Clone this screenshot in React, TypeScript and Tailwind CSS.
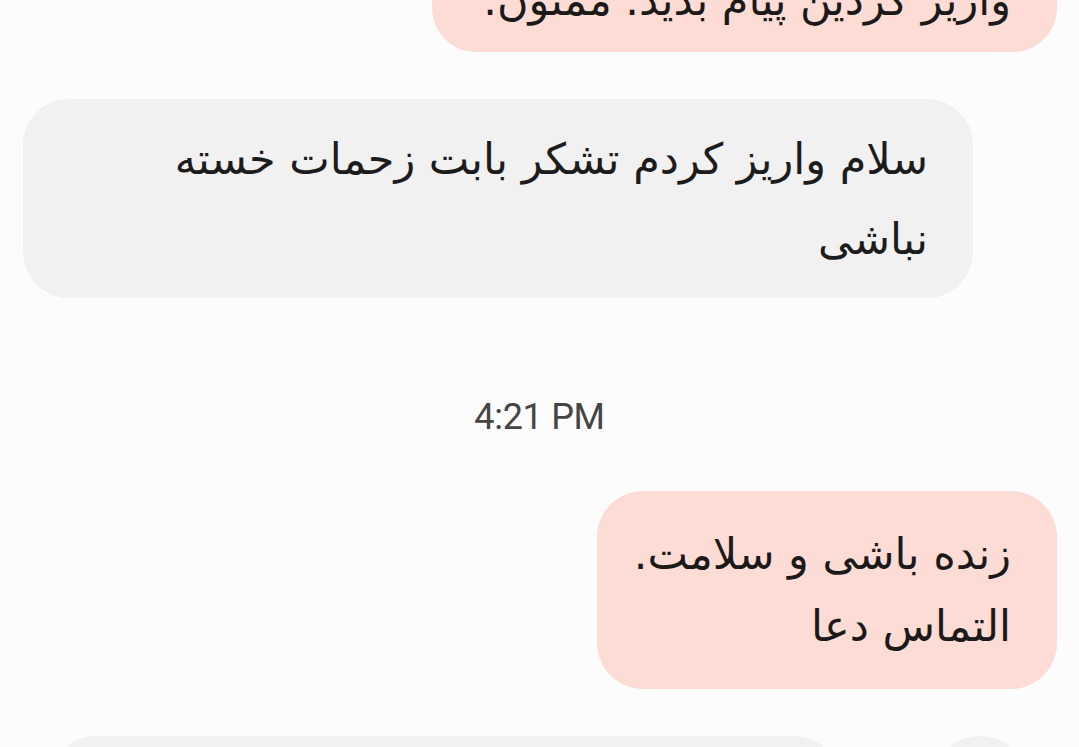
export default function App() {
  const fa = { fontFamily: '"DejaVu Sans", "Noto Sans", sans-serif' };

  return (
    <div className="h-[747px] w-full overflow-hidden bg-[#fcfcfc]">
      <div className="flex flex-col">
        {/* cut-off outgoing bubble at top */}
        <div className="-mt-[100px] ml-auto mr-[22px] flex h-[152px] w-[625px] items-end justify-end rounded-[44px] bg-[#fddcd5] px-[46px] pb-[22px]">
          <p dir="rtl" style={fa} className="whitespace-nowrap text-[43px] leading-[60px] text-[#1c1a19]">
            واریز کردین پیام بدید. ممنون.
          </p>
        </div>

        {/* incoming bubble */}
        <div className="ml-[23px] mt-[47px] flex h-[199px] w-[950px] items-center justify-end rounded-[46px] bg-[#f1f1f1] pl-[40px] pr-[45px]">
          <p dir="rtl" style={fa} className="text-[43px] leading-[80px] text-[#1c1c1c]">
            سلام واریز کردم تشکر بابت زحمات خسته
            <br />
            نباشی
          </p>
        </div>

        {/* time stamp */}
        <div className="mt-[97px] flex justify-center">
          <span className="font-['Roboto'] text-[36px] leading-[44px] tracking-[-0.3px] text-[#454545]">4:21 PM</span>
        </div>

        {/* outgoing bubble */}
        <div className="ml-auto mr-[22px] mt-[52px] flex h-[198px] w-[460px] items-center justify-end rounded-[46px] bg-[#fddcd5] pl-[20px] pr-[46px]">
          <p dir="rtl" style={fa} className="whitespace-nowrap text-[43px] leading-[72px] text-[#1c1a19]">
            زنده باشی و سلامت.
            <br />
            التماس دعا
          </p>
        </div>

        {/* cut-off bubbles at bottom */}
        <div className="mt-[47px] flex items-start">
          <div className="ml-[50px] h-[120px] w-[790px] rounded-[46px] bg-[#f1f1f1]" />
          <div className="ml-[90px] h-[120px] w-[100px] rounded-full bg-[#f1f1f1]" />
        </div>
      </div>
    </div>
  );
}
